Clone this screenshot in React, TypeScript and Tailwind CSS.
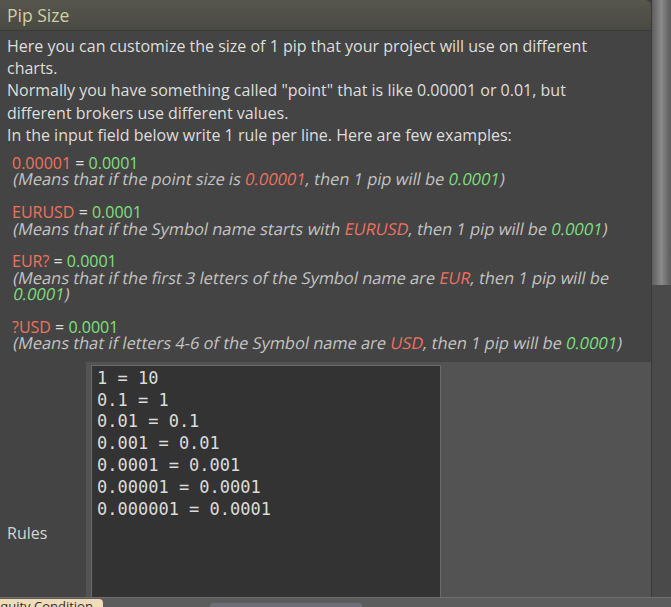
const red = "text-[#f0725f]";
const green = "text-[#7fe07f]";

// Qt draws these as a slanted regular face, so skew instead of using the true italic
function Slanted({ children }: { children: React.ReactNode }) {
  return (
    <p className="origin-bottom-left whitespace-nowrap text-[16.4px] text-[#c4c4c4] [transform:skewX(-11deg)]">
      {children}
    </p>
  );
}

function Example({
  lhs,
  last,
  children,
}: {
  lhs: string;
  last?: boolean;
  children: React.ReactNode;
}) {
  return (
    <div className={last ? "mb-[10px]" : "mb-[16.4px]"}>
      <p>
        <span className={red}>{lhs}</span> = <span className={green}>0.0001</span>
      </p>
      {children}
    </div>
  );
}

const rules = [
  "1 = 10",
  "0.1 = 1",
  "0.01 = 0.1",
  "0.001 = 0.01",
  "0.0001 = 0.001",
  "0.00001 = 0.0001",
  "0.000001 = 0.0001",
];

export default function App() {
  return (
    <div
      className="flex h-[607px] w-[671px] flex-col overflow-hidden bg-[#3c3c3c] text-[16px] text-[#dedede]"
      style={{ fontFamily: '"Open Sans", "Noto Sans", sans-serif' }}
    >
      <div className="flex min-h-0 flex-1">
        {/* panel */}
        <div className="flex w-[651px] flex-col rounded-tr-[6px] bg-[#444444]">
          <div className="flex h-[31px] items-center rounded-tr-[6px] border-b border-[#3a3a36] bg-gradient-to-b from-[#56564d] to-[#4a4a44] px-[7px] text-[17.5px] text-[#cfcfa6]">
            Pip Size
          </div>
          <div className="pl-[7px] pr-[24px] pt-[4px] leading-[22.2px]">
            <p>Here you can customize the size of 1 pip that your project will use on different charts.</p>
            <p>
              Normally you have something called "point" that is like 0.00001 or 0.01, but different brokers
              use different values.
            </p>
            <p>In the input field below write 1 rule per line. Here are few examples:</p>
          </div>
          <div className="pl-[12px] pr-[20px] pt-[9px] leading-[16.4px]">
            <Example lhs="0.00001">
              <Slanted>
                (Means that if the point size is <span className={red}>0.00001</span>, then 1 pip will be{" "}
                <span className={green}>0.0001</span>)
              </Slanted>
            </Example>
            <Example lhs="EURUSD">
              <Slanted>
                (Means that if the Symbol name starts with <span className={red}>EURUSD</span>, then 1 pip will
                be <span className={green}>0.0001</span>)
              </Slanted>
            </Example>
            <Example lhs="EUR?">
              <Slanted>
                (Means that if the first 3 letters of the Symbol name are <span className={red}>EUR</span>, then
                1 pip will be
              </Slanted>
              <Slanted>
                <span className={green}>0.0001</span>)
              </Slanted>
            </Example>
            <Example lhs="?USD" last>
              <Slanted>
                (Means that if letters 4-6 of the Symbol name are <span className={red}>USD</span>, then 1 pip
                will be <span className={green}>0.0001</span>)
              </Slanted>
            </Example>
          </div>
          <div className="flex min-h-0 flex-1">
            <div className="flex w-[86px] items-end pb-[52px] pl-[7px] text-[#d4d4d4]">Rules</div>
            <div className="flex-1 bg-[#535353] pl-[5px] pt-[3px]">
              <div
                className="h-full w-[350px] border border-b-0 border-[#6a6a6a] bg-[#333333] px-[5px] pt-[2px] text-[17px] leading-[21.8px] text-[#dcdcdc]"
                style={{ fontFamily: '"DejaVu Sans Mono", monospace' }}
              >
                {rules.map((r) => (
                  <div key={r} className="whitespace-pre">
                    {r}
                  </div>
                ))}
              </div>
            </div>
          </div>
        </div>
        {/* scrollbar */}
        <div className="flex w-[20px] flex-col border-l border-[#3a3a3a] bg-[#4a4a4a]">
          <div className="h-[285px] bg-gradient-to-r from-[#5e5e5e] via-[#8a8a8a] to-[#5a5a5a]" />
        </div>
      </div>
      <div className="flex h-[10px] items-end border-t border-[#6e6e6e] bg-[#5c5c5c]">
        <div className="h-[8px] overflow-hidden rounded-tr-[4px] bg-[#efdcb8] pr-[3px] text-[13px] leading-[14px] text-[#303030]">
          <span className="relative -left-[7px]">Equity Condition</span>
        </div>
        <div className="ml-[107px] h-[4px] w-[152px] rounded-t-[3px] bg-[#6e6e76]" />
      </div>
    </div>
  );
}
